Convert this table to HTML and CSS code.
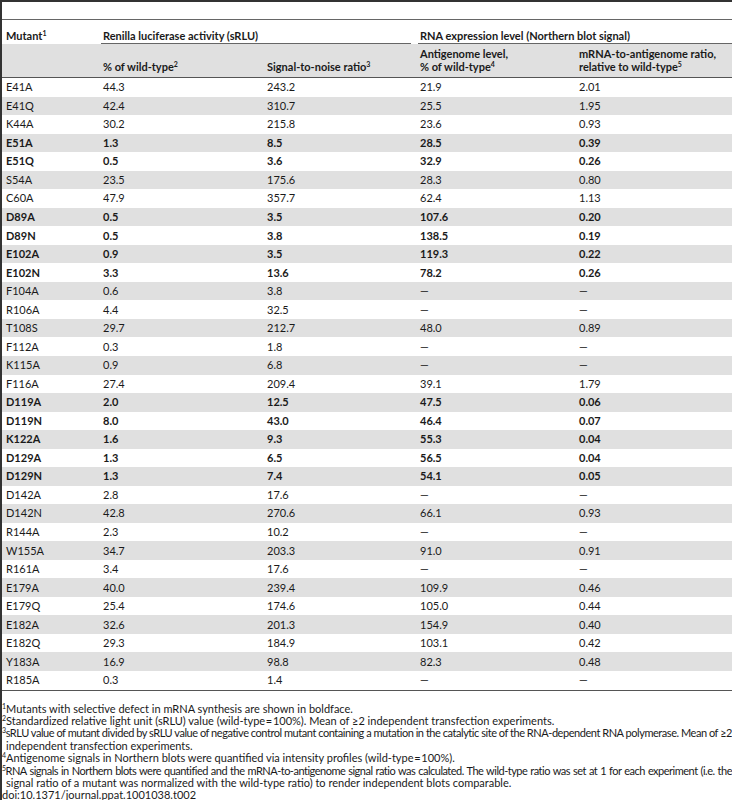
FILE: index.html
```html
<!DOCTYPE html>
<html>
<head>
<meta charset="utf-8">
<link rel="stylesheet" href="styles.css">
</head>
<body>
<div class="page">
  <div class="spacer"></div>
  <table class="tbl">
    <colgroup>
      <col class="c1"><col class="c2"><col class="c3"><col class="c4"><col class="c5">
    </colgroup>
    <thead>
      <tr class="h1">
        <th><div class="hin nol">Mutant<sup>1</sup></div></th>
        <th colspan="2" class="grp g1"><div class="hin">Renilla luciferase activity (sRLU)</div></th>
        <th colspan="2" class="grp g2"><div class="hin">RNA expression level (Northern blot signal)</div></th>
      </tr>
      <tr class="h2">
        <th></th>
        <th>% of wild-type<sup>2</sup></th>
        <th>Signal-to-noise ratio<sup>3</sup></th>
        <th>Antigenome level,<br>% of wild-type<sup>4</sup></th>
        <th>mRNA-to-antigenome ratio,<br>relative to wild-type<sup>5</sup></th>
      </tr>
    </thead>
    <tbody>
      <tr><td>E41A</td><td>44.3</td><td>243.2</td><td>21.9</td><td>2.01</td></tr>
      <tr><td>E41Q</td><td>42.4</td><td>310.7</td><td>25.5</td><td>1.95</td></tr>
      <tr><td>K44A</td><td>30.2</td><td>215.8</td><td>23.6</td><td>0.93</td></tr>
      <tr class="b"><td>E51A</td><td>1.3</td><td>8.5</td><td>28.5</td><td>0.39</td></tr>
      <tr class="b"><td>E51Q</td><td>0.5</td><td>3.6</td><td>32.9</td><td>0.26</td></tr>
      <tr><td>S54A</td><td>23.5</td><td>175.6</td><td>28.3</td><td>0.80</td></tr>
      <tr><td>C60A</td><td>47.9</td><td>357.7</td><td>62.4</td><td>1.13</td></tr>
      <tr class="b"><td>D89A</td><td>0.5</td><td>3.5</td><td>107.6</td><td>0.20</td></tr>
      <tr class="b"><td>D89N</td><td>0.5</td><td>3.8</td><td>138.5</td><td>0.19</td></tr>
      <tr class="b"><td>E102A</td><td>0.9</td><td>3.5</td><td>119.3</td><td>0.22</td></tr>
      <tr class="b"><td>E102N</td><td>3.3</td><td>13.6</td><td>78.2</td><td>0.26</td></tr>
      <tr><td>F104A</td><td>0.6</td><td>3.8</td><td>—</td><td>—</td></tr>
      <tr><td>R106A</td><td>4.4</td><td>32.5</td><td>—</td><td>—</td></tr>
      <tr><td>T108S</td><td>29.7</td><td>212.7</td><td>48.0</td><td>0.89</td></tr>
      <tr><td>F112A</td><td>0.3</td><td>1.8</td><td>—</td><td>—</td></tr>
      <tr><td>K115A</td><td>0.9</td><td>6.8</td><td>—</td><td>—</td></tr>
      <tr><td>F116A</td><td>27.4</td><td>209.4</td><td>39.1</td><td>1.79</td></tr>
      <tr class="b"><td>D119A</td><td>2.0</td><td>12.5</td><td>47.5</td><td>0.06</td></tr>
      <tr class="b"><td>D119N</td><td>8.0</td><td>43.0</td><td>46.4</td><td>0.07</td></tr>
      <tr class="b"><td>K122A</td><td>1.6</td><td>9.3</td><td>55.3</td><td>0.04</td></tr>
      <tr class="b"><td>D129A</td><td>1.3</td><td>6.5</td><td>56.5</td><td>0.04</td></tr>
      <tr class="b"><td>D129N</td><td>1.3</td><td>7.4</td><td>54.1</td><td>0.05</td></tr>
      <tr><td>D142A</td><td>2.8</td><td>17.6</td><td>—</td><td>—</td></tr>
      <tr><td>D142N</td><td>42.8</td><td>270.6</td><td>66.1</td><td>0.93</td></tr>
      <tr><td>R144A</td><td>2.3</td><td>10.2</td><td>—</td><td>—</td></tr>
      <tr><td>W155A</td><td>34.7</td><td>203.3</td><td>91.0</td><td>0.91</td></tr>
      <tr><td>R161A</td><td>3.4</td><td>17.6</td><td>—</td><td>—</td></tr>
      <tr><td>E179A</td><td>40.0</td><td>239.4</td><td>109.9</td><td>0.46</td></tr>
      <tr><td>E179Q</td><td>25.4</td><td>174.6</td><td>105.0</td><td>0.44</td></tr>
      <tr><td>E182A</td><td>32.6</td><td>201.3</td><td>154.9</td><td>0.40</td></tr>
      <tr><td>E182Q</td><td>29.3</td><td>184.9</td><td>103.1</td><td>0.42</td></tr>
      <tr><td>Y183A</td><td>16.9</td><td>98.8</td><td>82.3</td><td>0.48</td></tr>
      <tr><td>R185A</td><td>0.3</td><td>1.4</td><td>—</td><td>—</td></tr>
    </tbody>
  </table>
  <div class="notes">
    <p><sup>1</sup>Mutants with selective defect in mRNA synthesis are shown in boldface.</p>
    <p><sup>2</sup>Standardized relative light unit (sRLU) value (wild-type&#8202;=&#8202;100%). Mean of ≥2 independent transfection experiments.</p>
    <p><span class="l1 t3"><sup>3</sup>sRLU value of mutant divided by sRLU value of negative control mutant containing a mutation in the catalytic site of the RNA-dependent RNA polymerase. Mean of ≥2</span>independent transfection experiments.</p>
    <p><sup>4</sup>Antigenome signals in Northern blots were quantified via intensity profiles (wild-type&#8202;=&#8202;100%).</p>
    <p><span class="l1 t5"><sup>5</sup>RNA signals in Northern blots were quantified and the mRNA-to-antigenome signal ratio was calculated. The wild-type ratio was set at 1 for each experiment (i.e. the</span>signal ratio of a mutant was normalized with the wild-type ratio) to render independent blots comparable.</p>
    <p class="doi">doi:10.1371/journal.ppat.1001038.t002</p>
  </div>
</div>
</body>
</html>
```
FILE: styles.css
```css
html, body {
  margin: 0;
  padding: 0;
  background: #fff;
}
body {
  font-family: Lato, "Open Sans", sans-serif;
  font-size: 11px;
  color: #1a1a1a;
}
.page {
  width: 730px;
  border-left: 2px solid #333;
  border-top: 2px solid #333;
  min-height: 798px;
}
.spacer {
  height: 17px;
  border-bottom: 1px solid #666;
}
.tbl {
  width: 730px;
  border-collapse: separate;
  border-spacing: 0;
  table-layout: fixed;
}
.c1 { width: 97px; }
.c2 { width: 164px; }
.c3 { width: 153px; }
.c4 { width: 159px; }
.c5 { width: 157px; }
th, td {
  text-align: left;
  padding: 0 4px;
}
th {
  font-weight: bold;
}
sup {
  font-size: 7px;
  line-height: 0;
  vertical-align: 4px;
}
.h1 th {
  padding-top: 9px;
  padding-bottom: 0;
  vertical-align: bottom;
}
.hin {
  line-height: 14px;
  border-bottom: 1px solid #666;
}
.hin.nol {
  border-bottom-color: transparent;
}
.h1 .g1 {
  padding-left: 2px;
  padding-right: 5px;
}
.h1 .g1 .hin { padding-left: 2px; }
.h1 .g2 {
  padding-right: 0;
  padding-left: 2px;
}
.h1 .g2 .hin { padding-left: 2px; }
.h2 th {
  background: #e0e0e0;
  line-height: 13px;
  padding-top: 3px;
  padding-bottom: 4px;
  vertical-align: bottom;
  border-bottom: 1px solid #555;
}
tbody td {
  line-height: 14px;
  padding-top: 2.27px;
  padding-bottom: 2.27px;
}
tbody tr:nth-child(even) td {
  background: #e0e0e0;
}
tbody tr:last-child td {
  border-bottom: 1px solid #555;
}
tr.b td {
  font-weight: bold;
}
.notes {
  padding-top: 12px;
  text-align: justify;
  line-height: 12.4px;
  font-size: 11px;
}
.notes p {
  margin: 0;
  padding-left: 4px;
  text-indent: -4px;
}
.notes .l1 {
  display: block;
  text-align-last: justify;
  white-space: nowrap;
}
.notes .t3 {
  letter-spacing: -0.45px;
  word-spacing: -0.9px;
}
.notes .t5 {
  letter-spacing: -0.5px;
  word-spacing: -1px;
}
.notes sup {
  font-size: 7px;
  vertical-align: 4px;
}
.notes .doi {
  padding-left: 0;
  text-indent: 0;
}
```
